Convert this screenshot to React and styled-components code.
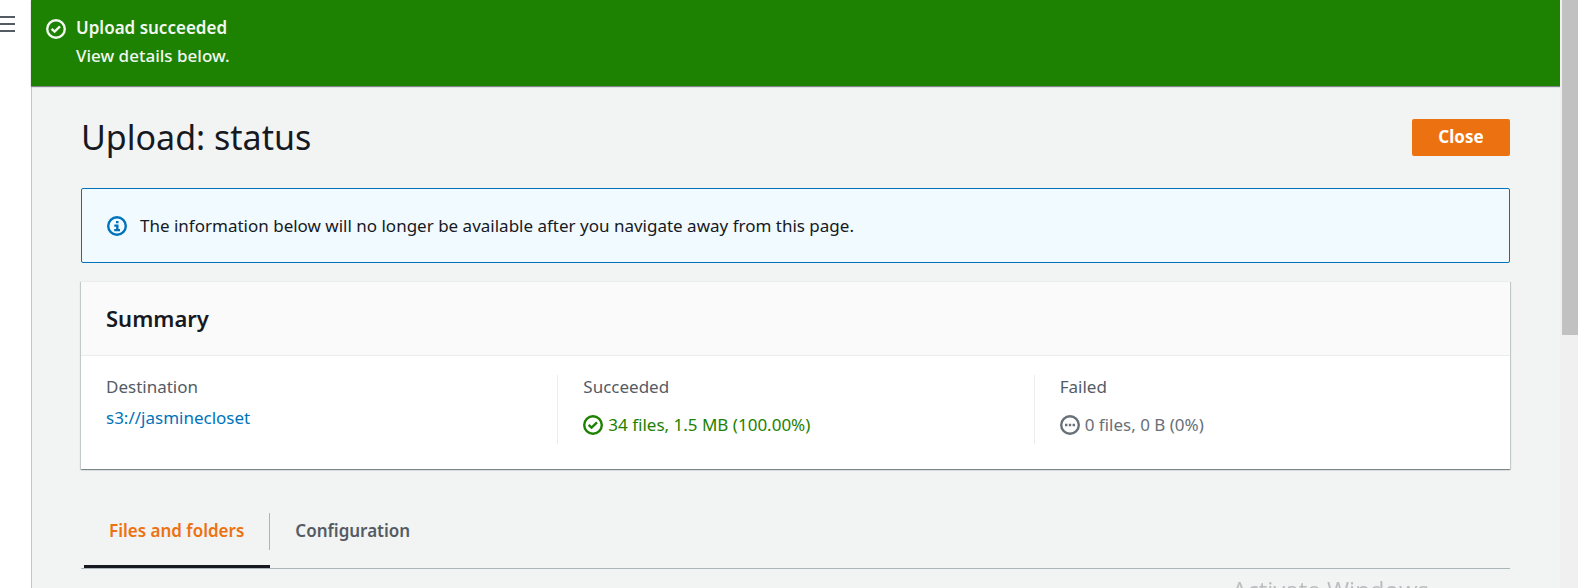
import React from "react";
import styled, { createGlobalStyle, css } from "styled-components";

const GlobalStyle = createGlobalStyle`
  *, *::before, *::after { box-sizing: border-box; }
  body {
    margin: 0;
    background: #ffffff;
    color: #16191f;
    font-family: "Noto Sans", "Open Sans", sans-serif;
    font-size: 17px;
    line-height: 28px;
  }
  h1, h2, p, dl, dt, dd { margin: 0; }
`;

const Shell = styled.div`
  display: flex;
  height: 100vh;
  overflow: hidden;
`;

const SideRail = styled.aside`
  flex: 0 0 31px;
`;

const MenuButton = styled.button`
  display: flex;
  margin-top: 16px;
  padding: 0;
  border: 0;
  background: none;
  color: #545b64;
`;

const Main = styled.main`
  flex: 1;
  min-width: 0;
  border-left: 1px solid #c3c6c8;
  background: #f2f3f3;
`;

const Flash = styled.section`
  display: flex;
  gap: 10px;
  min-height: 86px;
  margin-left: -1px;
  padding: 14px 15px;
  background: #1d8102;
  color: #f2f8f0;
  box-shadow: 0 1px 1px #7d868c;
`;

const FlashIcon = styled.span`
  display: flex;
  padding-top: 5px;
`;

const FlashTitle = styled.p`
  font-weight: 600;
`;

const FlashText = styled.p`
  font-weight: 500;
`;

const Content = styled.div`
  padding: 33px 50px 0 49px;
`;

const PageHeader = styled.header`
  display: flex;
  align-items: flex-start;
  justify-content: space-between;
  margin-bottom: 32px;
`;

const PageTitle = styled.h1`
  font-size: 34px;
  font-weight: 400;
  line-height: 37px;
`;

const PrimaryButton = styled.button`
  min-width: 98px;
  height: 37px;
  padding: 0 26px 2px;
  border: 0;
  border-radius: 2px;
  background: #ec7211;
  color: #ffffff;
  font: inherit;
  font-weight: 700;
`;

const Alert = styled.div`
  display: flex;
  align-items: center;
  gap: 13px;
  height: 75px;
  margin-bottom: 18px;
  padding: 0 25px;
  border: 1px solid #0073bb;
  border-radius: 2px;
  background: #f1faff;
`;

const AlertIcon = styled.span`
  display: flex;
  color: #0073bb;
`;

const Card = styled.section`
  background: #ffffff;
  border-top: 1px solid #eaeded;
  box-shadow: 0 1px 1px 0 rgba(0, 28, 36, 0.3), 1px 1px 1px 0 rgba(0, 28, 36, 0.15), -1px 1px 1px 0 rgba(0, 28, 36, 0.15);
`;

const CardHeader = styled.header`
  padding: 22px 25px 23px;
  border-bottom: 1px solid #eaeded;
  background: #fafafa;
`;

const CardTitle = styled.h2`
  font-size: 22px;
  font-weight: 600;
  line-height: 28px;
`;

const Stats = styled.dl`
  display: grid;
  grid-template-columns: repeat(3, 1fr);
  padding: 19px 0 25px;
`;

const Stat = styled.div`
  min-height: 69px;
  padding: 0 25px;

  & + & {
    border-left: 1px solid #eaeded;
  }
`;

const StatLabel = styled.dt`
  line-height: 24px;
  color: #545b64;
`;

const StatValue = styled.dd`
  display: flex;
  align-items: center;
  gap: 5px;
  padding-top: ${(p) => (p.$status ? "12px" : "5px")};
  color: ${(p) => p.$color || "inherit"};
`;

const DestinationLink = styled.a`
  color: #0073bb;
  text-decoration: none;
`;

const TabList = styled.div`
  display: flex;
  margin-top: 44px;
  padding-left: 3px;
  border-bottom: 1px solid #aab7b8;
`;

const Tab = styled.button`
  display: flex;
  padding: 0;
  border: 0;
  border-bottom: 3px solid transparent;
  background: none;
  color: #545b64;
  font: inherit;
  font-weight: 600;

  ${(p) =>
    p.$active &&
    css`
      border-bottom-color: #16191f;
      color: #ec7211;
    `}
`;

const TabLabel = styled.span`
  height: 37px;
  margin-bottom: 15px;
  padding: 4px 25px;
  border-right: ${(p) => (p.$divided ? "1px solid #aab7b8" : "0")};
`;

const ScrollTrack = styled.div`
  flex: 0 0 18px;
  padding-left: 2px;
  background: #f0f0f0;
`;

const ScrollThumb = styled.div`
  height: 57%;
  background: #c1c1c1;
`;

const Watermark = styled.div`
  position: fixed;
  right: 149px;
  bottom: -18px;
  color: #bcbdbe;
  font-family: "Open Sans", sans-serif;
  font-size: 24px;
  line-height: 32px;
  pointer-events: none;
`;

const Icon = styled.svg`
  flex: none;
  display: block;
  fill: none;
  stroke: currentColor;
  stroke-width: ${(p) => p.$stroke || 2.4};
`;

function MenuIcon() {
  return (
    <Icon $stroke={2} width="15" height="16" viewBox="0 0 15 16" aria-hidden="true">
      <path d="M0 1h15M0 8h15M0 15h15" />
    </Icon>
  );
}

function CheckIcon() {
  return (
    <Icon width="20" height="20" viewBox="0 0 20 20" aria-hidden="true">
      <circle cx="10" cy="10" r="8.8" />
      <path d="M5.6 9.8l3 2.8 5.4-5.2" />
    </Icon>
  );
}

function InfoIcon() {
  return (
    <Icon width="20" height="20" viewBox="0 0 20 20" aria-hidden="true">
      <circle cx="10" cy="10" r="8.8" />
      <path d="M9 6.1h2.5M7.3 9.6h4M10.3 8.6v5.6M7.2 14.1h5.8" />
    </Icon>
  );
}

function PendingIcon() {
  return (
    <Icon width="20" height="20" viewBox="0 0 20 20" aria-hidden="true">
      <circle cx="10" cy="10" r="8.8" />
      <path d="M5 10h2.4M8.8 10h2.4M12.6 10h2.4" />
    </Icon>
  );
}

export default function App() {
  return (
    <>
      <GlobalStyle />
      <Shell>
        <SideRail>
          <MenuButton type="button" aria-label="Open navigation">
            <MenuIcon />
          </MenuButton>
        </SideRail>
        <Main>
          <Flash role="status">
            <FlashIcon>
              <CheckIcon />
            </FlashIcon>
            <div>
              <FlashTitle>Upload succeeded</FlashTitle>
              <FlashText>View details below.</FlashText>
            </div>
          </Flash>
          <Content>
            <PageHeader>
              <PageTitle>Upload: status</PageTitle>
              <PrimaryButton type="button">Close</PrimaryButton>
            </PageHeader>
            <Alert>
              <AlertIcon>
                <InfoIcon />
              </AlertIcon>
              <p>The information below will no longer be available after you navigate away from this page.</p>
            </Alert>
            <Card>
              <CardHeader>
                <CardTitle>Summary</CardTitle>
              </CardHeader>
              <Stats>
                <Stat>
                  <StatLabel>Destination</StatLabel>
                  <StatValue>
                    <DestinationLink href="#destination">s3://jasminecloset</DestinationLink>
                  </StatValue>
                </Stat>
                <Stat>
                  <StatLabel>Succeeded</StatLabel>
                  <StatValue $status $color="#1d8102">
                    <CheckIcon />
                    34 files, 1.5 MB (100.00%)
                  </StatValue>
                </Stat>
                <Stat>
                  <StatLabel>Failed</StatLabel>
                  <StatValue $status $color="#687078">
                    <PendingIcon />
                    0 files, 0 B (0%)
                  </StatValue>
                </Stat>
              </Stats>
            </Card>
            <TabList role="tablist">
              <Tab type="button" role="tab" aria-selected="true" $active>
                <TabLabel $divided>Files and folders</TabLabel>
              </Tab>
              <Tab type="button" role="tab" aria-selected="false">
                <TabLabel>Configuration</TabLabel>
              </Tab>
            </TabList>
          </Content>
        </Main>
        <ScrollTrack>
          <ScrollThumb />
        </ScrollTrack>
      </Shell>
      <Watermark>Activate Windows</Watermark>
    </>
  );
}
